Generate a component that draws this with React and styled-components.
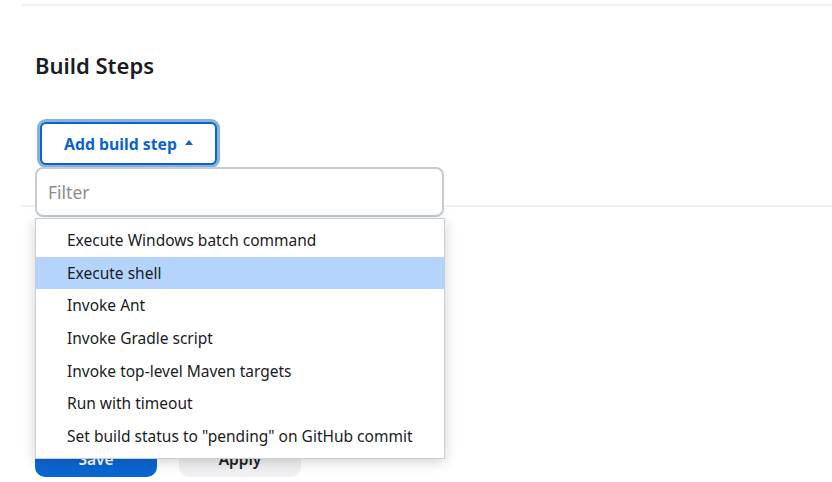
import React from 'react'
import styled, { createGlobalStyle } from 'styled-components'

const GlobalStyle = createGlobalStyle`
    body {
        margin: 0;
        background: #fff;
        font-family: "Noto Sans", "Open Sans", sans-serif;
        color: #1f1f24;
    }
`

const Page = styled.div`
    width: 832px;
    height: 482px;
    overflow: hidden;
    padding-top: 4px;
    box-sizing: border-box;
`

const Divider = styled.div`
    height: 2px;
    background: #eff0f3;
    margin-left: 22px;
`

const Section = styled.div`
    padding-left: 35px;
`

const Heading = styled.h2`
    margin: 44px 0 0;
    font-size: 22px;
    font-weight: 600;
    line-height: 30px;
    color: #1c1c22;
`

const StepHolder = styled.div`
    position: relative;
    margin-top: 42px;
    height: 43px;
`

const AddButton = styled.button`
    margin-left: 5px;
    width: 177px;
    height: 43px;
    border: 2px solid #0b63d0;
    border-radius: 6px;
    background: #fff;
    color: #0b63d0;
    font-family: inherit;
    font-size: 15.8px;
    font-weight: 700;
    display: flex;
    align-items: center;
    justify-content: center;
    gap: 8px;
    box-shadow: 0 0 0 3px #88b3d9;
    cursor: pointer;
`

const Caret = styled.span`
    width: 0;
    height: 0;
    border-left: 4px solid transparent;
    border-right: 4px solid transparent;
    border-bottom: 5px solid #0b63d0;
    margin-top: -2px;
`

const Popup = styled.div`
    position: absolute;
    top: 45px;
    left: 0;
    width: 410px;
    z-index: 5;
`

const Filter = styled.input`
    display: block;
    width: 409px;
    height: 50px;
    box-sizing: border-box;
    border: 2px solid #c5ccd1;
    border-radius: 8px;
    padding: 0 11px;
    font-family: inherit;
    font-size: 17.5px;
    color: #1f1f24;
    outline: none;
    &::placeholder {
        color: #8d8d8d;
    }
`

const List = styled.ul`
    list-style: none;
    margin: 1px 0 0;
    padding: 5px 0 5px;
    width: 410px;
    box-sizing: border-box;
    background: #fff;
    border: 1px solid #c8ced3;
    box-shadow: 0 3px 12px rgba(0, 0, 0, 0.18);
`

const Item = styled.li`
    height: 32.7px;
    line-height: 33.5px;
    padding-left: 31px;
    font-size: 15.5px;
    color: #1b1b1f;
    background: ${p => (p.$active ? '#b4d4fd' : 'transparent')};
`

const LowerDivider = styled(Divider)`
    margin-top: 40px;
`

const Actions = styled.div`
    display: flex;
    gap: 22px;
    padding: 234px 0 0 35px;
`

const ActionButton = styled.button`
    width: 122px;
    height: 36px;
    border: none;
    border-radius: 10px;
    font-family: inherit;
    font-size: 15.5px;
    font-weight: 600;
    background: ${p => (p.$primary ? '#0b66d3' : '#f1f1f3')};
    color: ${p => (p.$primary ? '#fff' : '#1f1f24')};
`

const steps = [
    'Execute Windows batch command',
    'Execute shell',
    'Invoke Ant',
    'Invoke Gradle script',
    'Invoke top-level Maven targets',
    'Run with timeout',
    'Set build status to "pending" on GitHub commit',
]

function App() {
    return (
        <Page>
            <GlobalStyle />
            <Divider />
            <Section>
                <Heading>Build Steps</Heading>
                <StepHolder>
                    <AddButton>
                        Add build step
                        <Caret />
                    </AddButton>
                    <Popup>
                        <Filter placeholder='Filter' />
                        <List>
                            {steps.map((s, i) => (
                                <Item key={s} $active={i === 1}>{s}</Item>
                            ))}
                        </List>
                    </Popup>
                </StepHolder>
            </Section>
            <LowerDivider />
            <Actions>
                <ActionButton $primary>Save</ActionButton>
                <ActionButton>Apply</ActionButton>
            </Actions>
        </Page>
    )
}

export default App
